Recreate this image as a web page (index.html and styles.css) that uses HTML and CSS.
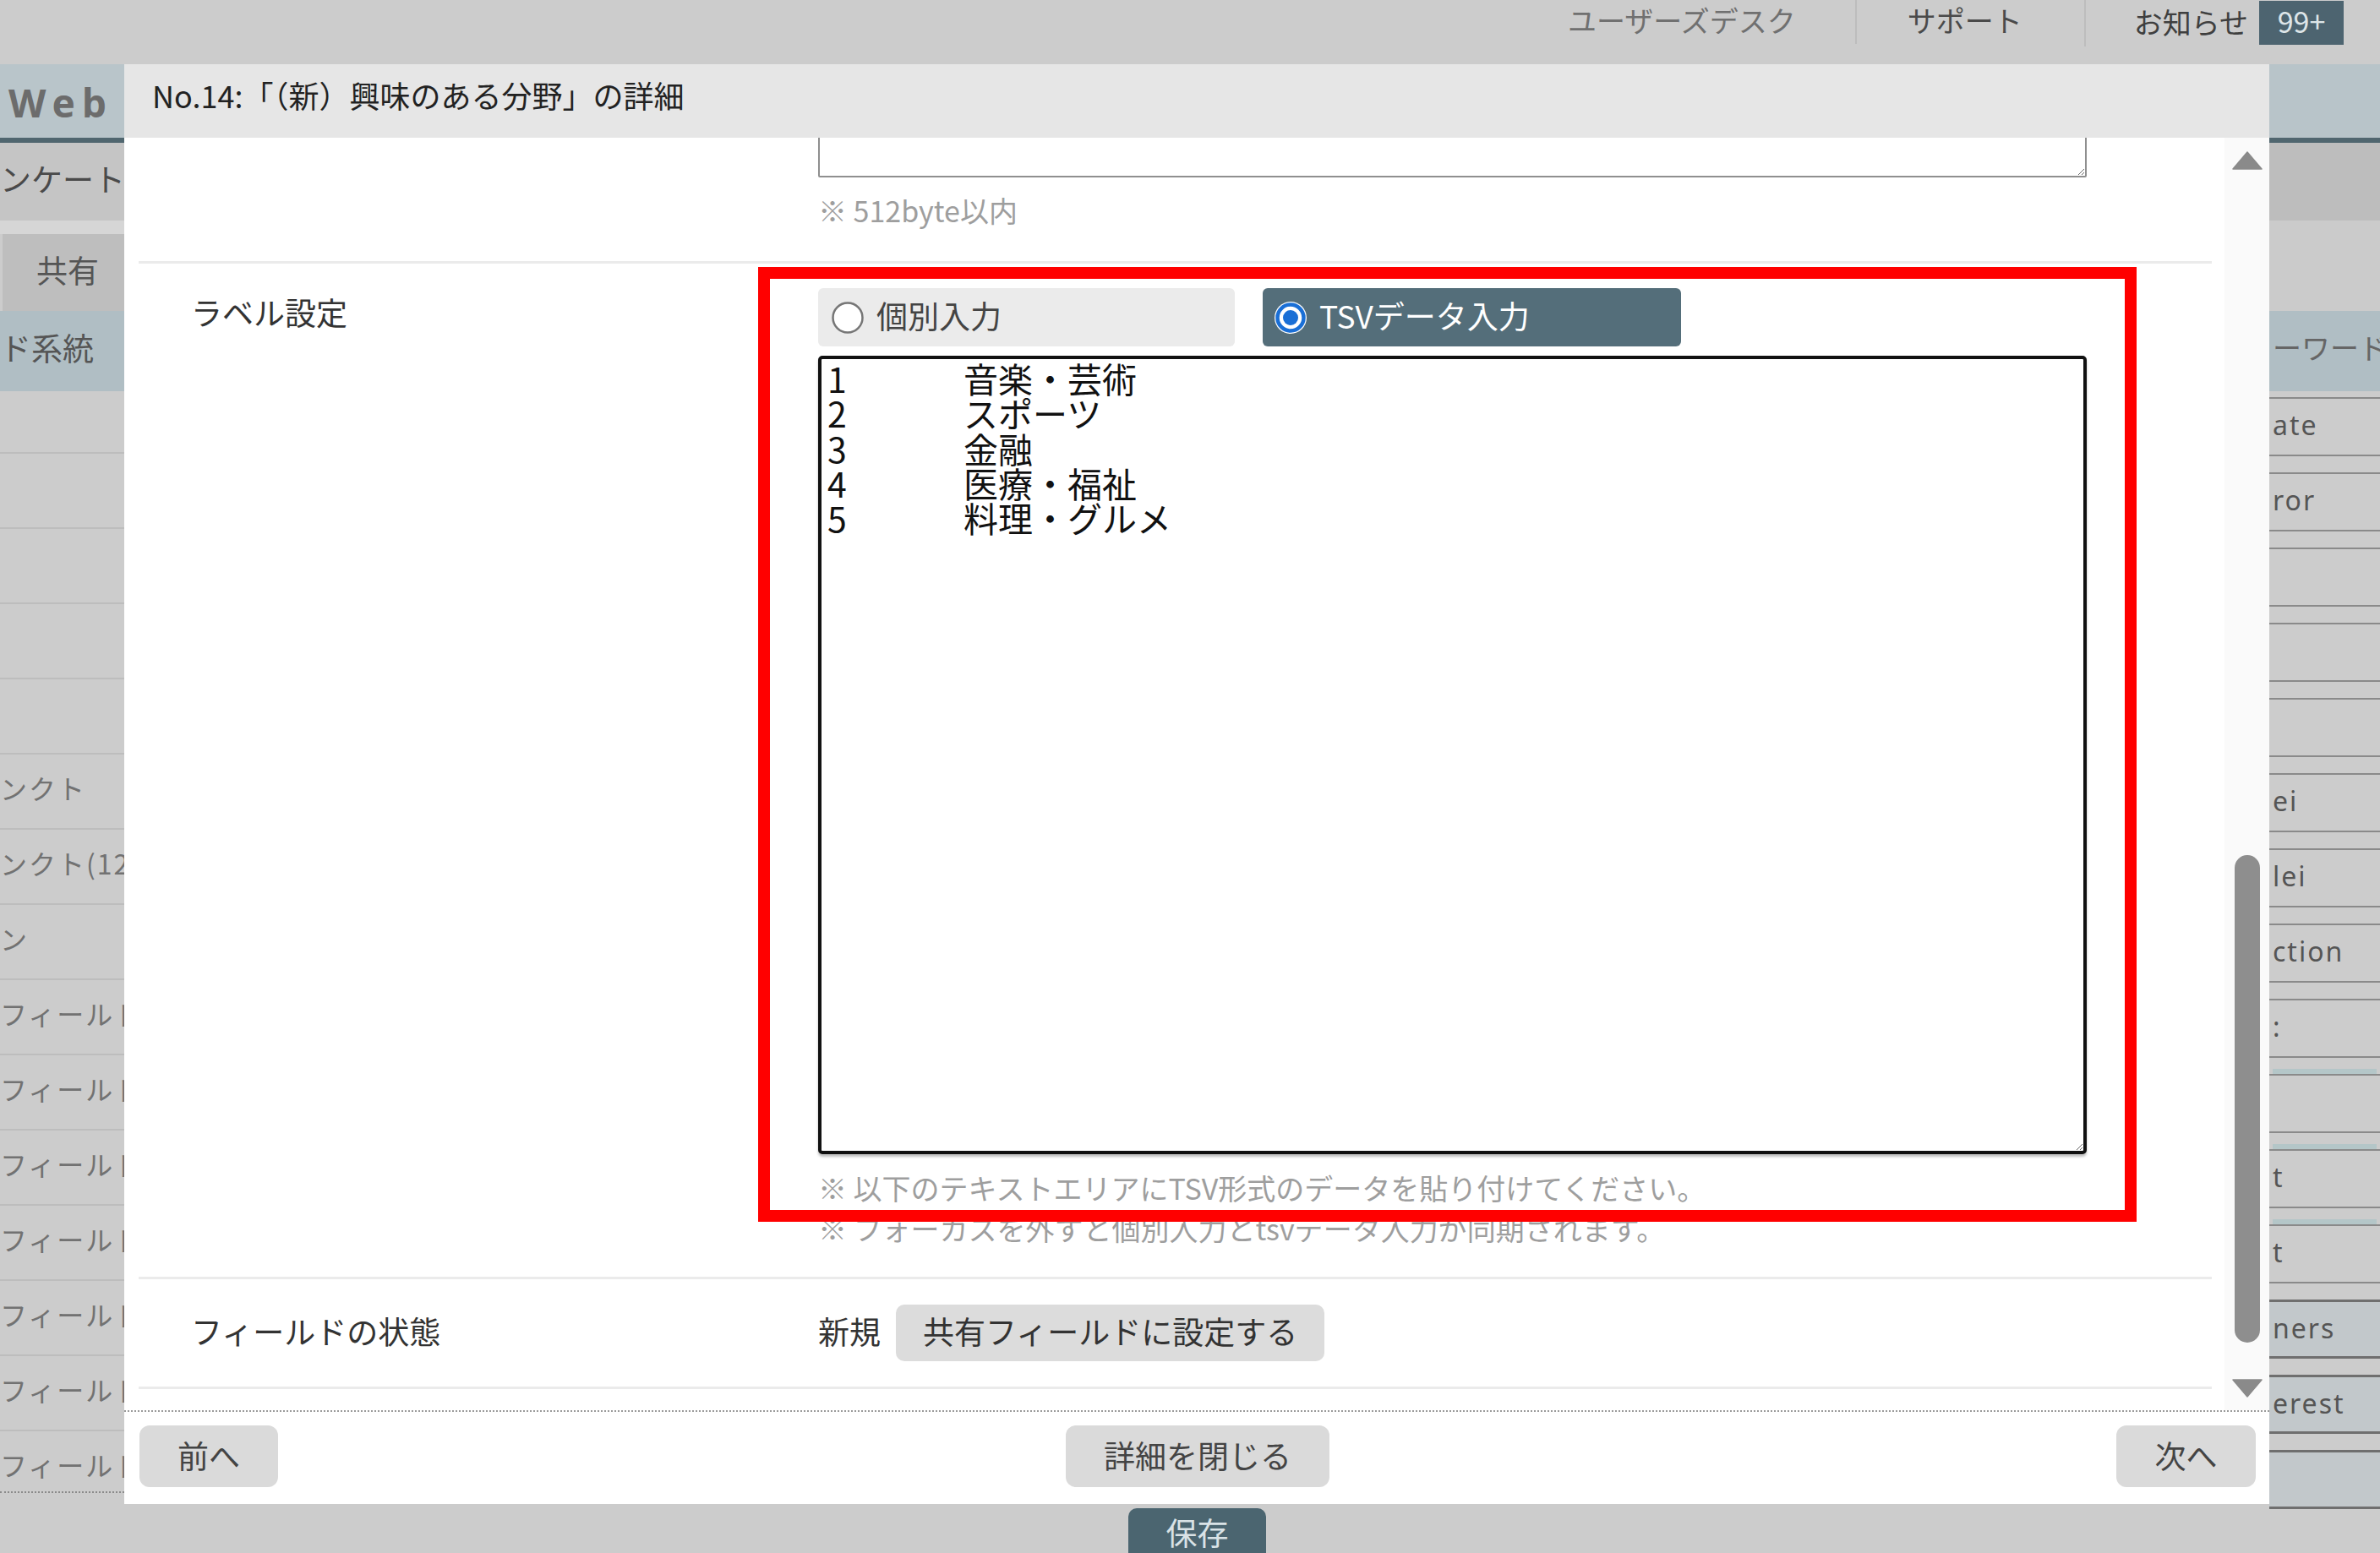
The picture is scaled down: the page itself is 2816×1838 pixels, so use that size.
FILE: index.html
```html
<!DOCTYPE html>
<html lang="ja">
<head>
<meta charset="utf-8">
<title>No.14 詳細</title>
<link rel="stylesheet" href="styles.css">
</head>
<body>
<header class="topbar">
  <nav class="topnav">
    <span class="nav-item nav-desk">ユーザーズデスク</span>
    <span class="nav-item nav-support">サポート</span>
    <span class="nav-item nav-news">お知らせ<span class="badge">99+</span></span>
  </nav>
</header>
<div class="main">
  <aside class="side-left">
    <div class="sl-web">Web</div>
    <div class="sl-enq">ンケート</div>
    <div class="sl-gap"></div>
    <div class="sl-share">共有</div>
    <div class="sl-kei">ド系統</div>
    <div class="sl-row sl-first"></div>
    <div class="sl-row"></div>
    <div class="sl-row"></div>
    <div class="sl-row"></div>
    <div class="sl-row"></div>
    <div class="sl-row">ンクト</div>
    <div class="sl-row">ンクト(12</div>
    <div class="sl-row">ン</div>
    <div class="sl-row">フィールド</div>
    <div class="sl-row">フィールド</div>
    <div class="sl-row">フィールド</div>
    <div class="sl-row">フィールド</div>
    <div class="sl-row">フィールド</div>
    <div class="sl-row">フィールド</div>
    <div class="sl-row sl-last">フィールド</div>
  </aside>

  <div class="center">
    <section class="modal">
      <div class="modal-head">No.14:「（新）興味のある分野」の詳細</div>
      <div class="modal-body">
        <div class="scroll-area">
          <div class="scroll-content">
            <div class="row row-partial">
              <div class="row-label"></div>
              <div class="row-value">
                <textarea class="ta-small"></textarea>
                <p class="note note-first">※ 512byte以内</p>
              </div>
            </div>
            <div class="row row-labels">
              <div class="row-label">ラベル設定</div>
              <div class="row-value">
                <div class="mode-group">
                  <label class="mode mode-off">
                    <svg class="radio" viewBox="0 0 40 40" width="40" height="40"><circle cx="20" cy="20" r="17.5" fill="#fff" stroke="#767676" stroke-width="2.5"/></svg>
                    <span>個別入力</span>
                  </label>
                  <label class="mode mode-on">
                    <svg class="radio" viewBox="0 0 40 40" width="40" height="40"><circle cx="20" cy="20" r="19" fill="#fff"/><circle cx="20" cy="20" r="15.5" fill="#fff" stroke="#1a6fd6" stroke-width="4.5"/><circle cx="20" cy="20" r="9" fill="#1a6fd6"/></svg>
                    <span>TSVデータ入力</span>
                  </label>
                </div>
                <textarea class="ta-tsv" spellcheck="false">1	音楽・芸術
2	スポーツ
3	金融
4	医療・福祉
5	料理・グルメ</textarea>
                <p class="note note-a">※ 以下のテキストエリアにTSV形式のデータを貼り付けてください。</p>
                <p class="note">※ フォーカスを外すと個別入力とtsvデータ入力が同期されます。</p>
              </div>
            </div>
            <div class="row row-state">
              <div class="row-label">フィールドの状態</div>
              <div class="row-value state-value">
                <span class="state-text">新規</span>
                <button class="btn btn-share">共有フィールドに設定する</button>
              </div>
            </div>
          </div>
        </div>
        <div class="scrollbar">
          <svg class="sb-arrow sb-up" viewBox="0 0 36 22" width="36" height="22"><path d="M18 1 L35 21 L1 21 Z" fill="#8a8a8a" stroke="#8a8a8a" stroke-width="1.5" stroke-linejoin="round"/></svg>
          <div class="sb-thumb"></div>
          <svg class="sb-arrow sb-down" viewBox="0 0 36 22" width="36" height="22"><path d="M1 1 L35 1 L18 21 Z" fill="#8a8a8a" stroke="#8a8a8a" stroke-width="1.5" stroke-linejoin="round"/></svg>
        </div>
      </div>
      <div class="modal-foot">
        <button class="btn btn-foot btn-prev">前へ</button>
        <button class="btn btn-foot btn-close">詳細を閉じる</button>
        <button class="btn btn-foot btn-next">次へ</button>
      </div>
    </section>
    <div class="under-bar"><button class="save-btn">保存</button></div>
  </div>

  <aside class="side-right">
    <div class="sr-head"></div>
    <div class="sr-a"></div>
    <div class="sr-b"></div>
    <div class="sr-kw">ーワード</div>
    <div class="sr-list">
      <div class="sr-row">ate</div>
      <div class="sr-row">ror</div>
      <div class="sr-row"></div>
      <div class="sr-row"></div>
      <div class="sr-row"></div>
      <div class="sr-row">ei</div>
      <div class="sr-row">lei</div>
      <div class="sr-row">ction</div>
      <div class="sr-row">:</div>
      <div class="sr-row sr-tint"></div>
      <div class="sr-row sr-tint">t</div>
      <div class="sr-row sr-tint">t</div>
      <div class="sr-row sr-dark">ners</div>
      <div class="sr-row sr-dark">erest</div>
      <div class="sr-row sr-dark"></div>
    </div>
  </aside>
</div>
<div class="highlight"></div>
</body>
</html>
```

FILE: styles.css
```css
* { box-sizing: border-box; }

html, body {
  margin: 0;
  padding: 0;
}

body {
  width: 2816px;
  height: 1838px;
  overflow: hidden;
  position: relative;
  background: #cccccc;
  font-family: "Noto Sans CJK JP", "Noto Sans", sans-serif;
  color: #333;
}

/* ---------- top bar ---------- */
.topbar {
  height: 76px;
  display: flex;
  justify-content: flex-end;
  align-items: flex-start;
  padding-right: 43px;
}
.topnav {
  display: flex;
  align-items: flex-start;
}
.nav-item {
  height: 52px;
  display: flex;
  align-items: center;
  padding-bottom: 5px;
  font-size: 34px;
  white-space: nowrap;
}
.nav-desk {
  color: #707070;
  padding-right: 70px;
}
.nav-support {
  color: #4a4a4a;
  border-left: 2px solid #bdbdbd;
  padding-left: 60px;
  padding-right: 73px;
}
.nav-news {
  color: #3f3f3f;
  border-left: 2px solid #bdbdbd;
  padding-left: 57px;
  height: 55px;
  gap: 13px;
}
.badge {
  width: 100px;
  height: 52px;
  margin-top: 3px;
  padding-bottom: 4px;
  background: #4d6470;
  color: #dde5e8;
  font-size: 34px;
  display: flex;
  align-items: center;
  justify-content: center;
}

/* ---------- main columns ---------- */
.main {
  display: flex;
  height: 1762px;
}

.side-left {
  width: 147px;
  flex: none;
  overflow: hidden;
  background: #cccccc;
  white-space: nowrap;
}
.sl-web {
  height: 93px;
  background: #b9c5ca;
  border-bottom: 6px solid #50666f;
  padding-left: 10px;
  font-family: "Noto Sans", "DejaVu Sans", sans-serif;
  font-weight: 700;
  font-size: 46px;
  letter-spacing: 8px;
  line-height: 90px;
  color: #6c6c6c;
}
.sl-enq {
  height: 92px;
  background: #c5c5c5;
  font-size: 37px;
  line-height: 84px;
  color: #4a4a4a;
}
.sl-gap {
  height: 16px;
  background: #d6d6d6;
}
.sl-share {
  height: 91px;
  margin-left: 3px;
  background: #bebebe;
  padding-left: 40px;
  font-size: 37px;
  line-height: 84px;
  color: #555;
}
.sl-kei {
  height: 95px;
  background: #b0bec4;
  font-size: 37px;
  line-height: 86px;
  color: #555;
}
.sl-row {
  height: 89px;
  border-top: 2px solid #bdbdbd;
  font-size: 32px;
  letter-spacing: 2px;
  line-height: 78px;
  color: #727272;
}
.sl-first {
  height: 72px;
  border-top: none;
}
.sl-last {
  height: 75px;
  border-bottom: 2px dotted #8a8a8a;
}

.center {
  width: 2538px;
  flex: none;
  display: flex;
  flex-direction: column;
}

/* ---------- modal ---------- */
.modal {
  height: 1704px;
  background: #fff;
  display: flex;
  flex-direction: column;
}
.modal-head {
  height: 87px;
  flex: none;
  background: #e6e6e6;
  padding-left: 33px;
  font-size: 36px;
  line-height: 72px;
  color: #222;
  white-space: nowrap;
}
.modal-body {
  flex: 1;
  display: flex;
  min-height: 0;
}
.scroll-area {
  flex: 1;
  overflow: hidden;
}
.scroll-content {
  margin-top: -53px;
}

.row {
  display: grid;
  grid-template-columns: 804px 1fr;
  margin: 0 15px 0 17px;
  border-bottom: 3px solid #ebebeb;
}
.row-label {
  padding-left: 62px;
  font-size: 37px;
  color: #333;
  white-space: nowrap;
}
.row-value {
  padding-right: 148px;
  min-width: 0;
}

.row-partial {
  padding-bottom: 36px;
}
.ta-small {
  display: block;
  width: 100%;
  height: 100px;
  border: 2px solid #8f8f8f;
  border-radius: 2px;
  background: #fff;
  resize: vertical;
  margin: 0;
}
.note {
  margin: 0;
  font-size: 34px;
  line-height: 48px;
  color: #9e9e9e;
  white-space: nowrap;
}
.note-first {
  margin-top: 15px;
}

.row-labels {
  padding-top: 29px;
  padding-bottom: 33px;
}
.row-labels .row-label {
  line-height: 56px;
}
.mode-group {
  display: flex;
  gap: 33px;
}
.mode {
  width: 493px;
  height: 69px;
  border-radius: 6px;
  display: flex;
  align-items: center;
  gap: 14px;
  padding-left: 15px;
  font-size: 37px;
  white-space: nowrap;
}
.mode span {
  margin-top: -6px;
}
.mode-off {
  background: #ebebeb;
  color: #444;
}
.mode-on {
  width: 495px;
  background: #546e7a;
  color: #fff;
  padding-left: 13px;
}
.radio {
  flex: none;
  display: block;
}
.ta-tsv {
  display: block;
  width: 100%;
  height: 945px;
  margin: 11px 0 0;
  border: 4px solid #111;
  border-radius: 5px;
  box-shadow: 0 3px 3px rgba(0, 0, 0, 0.25);
  padding: 2px 7px;
  font-family: "Noto Sans CJK JP", sans-serif;
  font-size: 41px;
  line-height: 41.3px;
  tab-size: 161px;
  -moz-tab-size: 161px;
  color: #111;
  background: #fff;
  resize: vertical;
  overflow: hidden;
}
.note-a {
  margin-top: 16px;
}

.row-state {
  padding-top: 30px;
  padding-bottom: 30px;
}
.row-state .row-label {
  line-height: 62px;
}
.state-value {
  display: flex;
  align-items: center;
  gap: 18px;
}
.state-text {
  font-size: 37px;
  color: #333;
  margin-top: -5px;
}

.btn {
  font-family: "Noto Sans CJK JP", sans-serif;
  border: none;
  margin: 0;
  cursor: pointer;
  white-space: nowrap;
}
.btn-share {
  height: 67px;
  padding: 0 32px 5px;
  background: #dcdcdc;
  border-radius: 10px;
  font-size: 37px;
  color: #333;
}

/* scrollbar */
.scrollbar {
  width: 53px;
  flex: none;
  background: #fafafa;
  display: flex;
  flex-direction: column;
  align-items: center;
}
.sb-arrow {
  display: block;
  flex: none;
}
.sb-up {
  margin-top: 16px;
}
.sb-thumb {
  width: 30px;
  height: 577px;
  margin-top: 811px;
  border-radius: 15px;
  background: #8e8e8e;
  flex: none;
}
.sb-down {
  margin-top: 43px;
}

/* footer */
.modal-foot {
  height: 111px;
  flex: none;
  border-top: 2px dotted #9a9a9a;
  display: grid;
  grid-template-columns: 1fr auto 1fr;
  align-items: start;
  padding: 16px 16px 0 18px;
}
.btn-foot {
  height: 73px;
  background: #dadada;
  border-radius: 12px;
  font-size: 37px;
  color: #444;
  padding: 0 0 4px;
}
.btn-prev {
  justify-self: start;
  width: 164px;
}
.btn-close {
  justify-self: center;
  width: 312px;
}
.btn-next {
  justify-self: end;
  width: 165px;
}

.under-bar {
  flex: 1;
  overflow: hidden;
  padding: 5px 0 0 1188px;
}
.save-btn {
  width: 163px;
  height: 80px;
  border: none;
  border-radius: 10px 10px 0 0;
  background: #4b6570;
  color: #d9e2e6;
  font-family: "Noto Sans CJK JP", sans-serif;
  font-size: 37px;
  line-height: 56px;
  padding: 0 0 24px;
  display: block;
}

/* ---------- right sidebar ---------- */
.side-right {
  width: 131px;
  flex: none;
  overflow: hidden;
  background: #cccccc;
  white-space: nowrap;
}
.sr-head {
  height: 93px;
  background: #b8c4c9;
  border-bottom: 6px solid #50666f;
}
.sr-a {
  height: 92px;
  background: #bdbdbd;
}
.sr-b {
  height: 107px;
  background: #cbcbcb;
}
.sr-kw {
  height: 95px;
  background: #b0bec4;
  padding-left: 4px;
  font-size: 34px;
  line-height: 86px;
  color: #666;
}
.sr-list {
  padding-top: 7px;
  display: flex;
  flex-direction: column;
  gap: 19px;
}
.sr-row {
  height: 70px;
  flex: none;
  border-top: 2px solid #8a8a8a;
  border-bottom: 2px solid #8a8a8a;
  padding-left: 4px;
  font-family: "Noto Sans", "DejaVu Sans", sans-serif;
  font-size: 32px;
  letter-spacing: 2px;
  line-height: 62px;
  color: #555;
}
.sr-tint {
  box-shadow: 0 -10px 0 -4px #b4c6c8;
}
.sr-dark {
  background: #c2c8cb;
  border-top: 3px solid #6f6f6f;
  border-bottom: 3px solid #6f6f6f;
}

/* ---------- highlight overlay ---------- */
.highlight {
  position: absolute;
  left: 897px;
  top: 316px;
  width: 1631px;
  height: 1130px;
  border: 14px solid #ff0000;
  pointer-events: none;
}
```
